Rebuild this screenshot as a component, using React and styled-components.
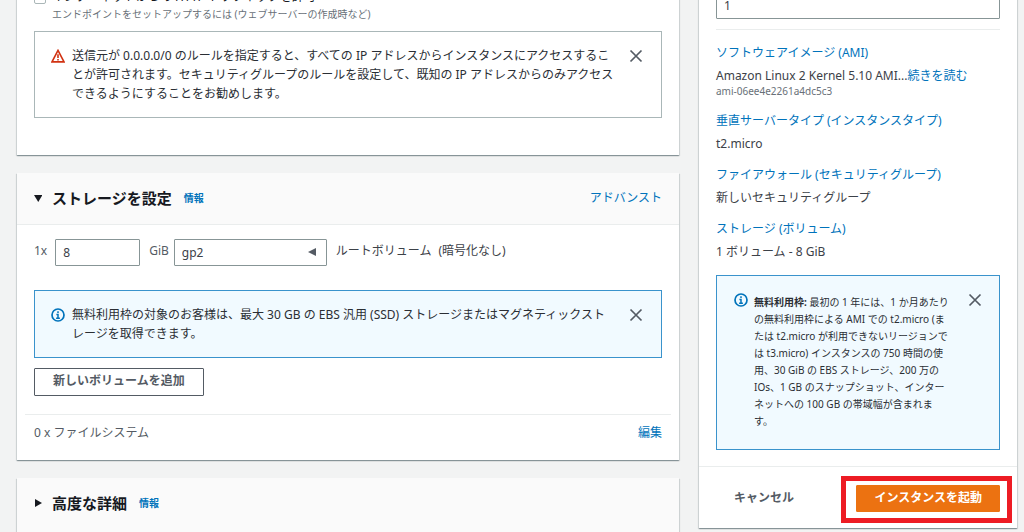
import React from 'react';
import styled, { createGlobalStyle } from 'styled-components';

const GlobalStyle = createGlobalStyle`
  *, *::before, *::after { box-sizing: border-box; }
  body {
    margin: 0;
    background: #f2f3f3;
    color: #16191f;
    font-family: "Noto Sans", "Noto Sans CJK JP", sans-serif;
    font-size: 12px;
    line-height: 18px;
  }
  button, input, select { font: inherit; color: inherit; }
  p, h2, dl, dd { margin: 0; }
`;

const Page = styled.div`
  height: 100vh;
  overflow: hidden;
`;

const Columns = styled.div`
  display: grid;
  grid-template-columns: minmax(0, 1fr) 318px;
  align-items: start;
  gap: 20px;
  margin-top: -12px;
  padding: 0 7px 0 17px;
`;

const Stack = styled.main`
  display: flex;
  flex-direction: column;
  gap: 18px;
`;

const Card = styled.section`
  background: #fff;
  box-shadow: 0 1px 1px 0 rgba(0, 28, 36, 0.3), 1px 1px 1px 0 rgba(0, 28, 36, 0.1),
    -1px 1px 1px 0 rgba(0, 28, 36, 0.1);
`;

const CardHeader = styled.header`
  display: flex;
  align-items: center;
  justify-content: space-between;
  height: 52px;
  padding: 0 17px 2px;
  background: #fafafa;
  border-bottom: 1px solid #eaeded;
`;

const Title = styled.h2`
  display: flex;
  align-items: center;
  font-size: 15px;
  font-weight: 700;
  line-height: 20px;
`;

const Toggle = styled.button`
  display: flex;
  align-items: center;
  gap: 10px;
  padding: 0;
  border: 0;
  background: none;
`;

const Link = styled.a`
  color: #0073bb;
  text-decoration: none;
`;

const InfoLink = styled(Link)`
  margin-left: 12px;
  font-size: 10px;
  font-weight: 700;
`;

const CardBody = styled.div`
  padding: ${(p) => p.$top}px 17px ${(p) => p.$bottom}px;
`;

const CollapsedCard = styled(Card)`
  padding-bottom: 18px;
  background: #fafafa;

  ${CardHeader} { border-bottom: 0; }
`;

const CheckRow = styled.label`
  display: flex;
  align-items: center;
  gap: 6px;
`;

const Checkbox = styled.input`
  appearance: none;
  width: 12px;
  height: 12px;
  margin: 2px 0 0;
  border: 1px solid #aab7b8;
  border-radius: 2px;
  background: #fff;
`;

const Hint = styled.p`
  margin: 0 0 9px 18px;
  color: #687078;
  font-size: 10px;
  line-height: 16px;
`;

const AlertBox = styled.div`
  display: flex;
  align-items: flex-start;
  padding: ${(p) => (p.$small ? '18px 16px 19px 17px' : '14px 17px 14px 16px')};
  border: 1px solid ${(p) => (p.$info ? '#3a93cc' : '#aab7b8')};
  background: ${(p) => (p.$info ? '#f1faff' : '#fff')};
`;

const AlertIcon = styled.svg`
  flex: none;
  width: 14px;
  height: 14px;
  margin: ${(p) => (p.$small ? '-1px 6px 0 0' : '3px 7px 0 0')};
`;

const AlertText = styled.p`
  flex: 1;
  min-width: 0;
  white-space: nowrap;
  color: #2a2e34;
  font-size: ${(p) => (p.$small ? 10 : 12)}px;
  line-height: ${(p) => (p.$small ? 17 : 19)}px;
`;

const CloseButton = styled.button`
  flex: none;
  display: flex;
  margin: ${(p) => (p.$small ? '-2px' : '2px')} 0 0;
  padding: 1px;
  border: 0;
  background: none;
  color: #545b64;
`;

const FieldRow = styled.div`
  display: flex;
  align-items: flex-start;
  margin-bottom: 24px;
  color: #545b64;
  line-height: 24px;
`;

const FieldLabel = styled.label`
  margin: 0 ${(p) => p.$after}px 0 ${(p) => p.$before || 0}px;
`;

const TextBox = styled.input`
  display: block;
  width: ${(p) => p.$width};
  height: 27px;
  padding: 0 7px;
  border: 1px solid #879596;
  border-radius: 1px;
  background: #fff;
  color: #3c4148;
`;

const SelectWrap = styled.span`
  position: relative;
  width: 153px;
  margin-right: 9px;

  svg {
    position: absolute;
    top: 9px;
    right: 11px;
    pointer-events: none;
  }
`;

const Select = styled.select`
  appearance: none;
  display: block;
  width: 100%;
  height: 27px;
  padding: 0 7px;
  border: 1px solid #879596;
  border-radius: 1px;
  background: #fff;
  color: #3c4148;
`;

const RootLabel = styled.span`
  margin-right: 7px;
  color: #3c4148;
`;

const Button = styled.button`
  height: ${(p) => (p.$tall ? 28 : 27)}px;
  padding: 0 ${(p) => (p.$tall ? 18 : 17)}px 2px;
  border: 1px solid ${(p) => p.$border || p.$fill || 'transparent'};
  border-radius: 1px;
  background: ${(p) => p.$fill || 'transparent'};
  color: ${(p) => (p.$fill ? '#fff' : '#545b64')};
  font-weight: 700;
  line-height: 18px;
  white-space: nowrap;
`;

const AddRow = styled.div`
  display: flex;
  margin-top: 10px;
`;

const FileSystemRow = styled.div`
  display: flex;
  justify-content: space-between;
  margin: 18px -9px 0;
  padding: 9px 9px 0;
  border-top: 1px solid #eaeded;
  color: #545b64;
`;

const SummaryBody = styled.div`
  padding: 4px 17px 16px;
`;

const SummaryList = styled.dl`
  margin: 10px 0 14px;
  padding-top: 14px;
  border-top: 1px solid #eaeded;
  white-space: nowrap;
`;

const SummaryItem = styled.div`
  & + & { margin-top: 13px; }
  dd { margin-top: 5px; color: #3c4148; }
`;

const Small = styled.span`
  display: block;
  padding-bottom: 2px;
  color: #687078;
  font-size: 10px;
  line-height: 12px;
`;

const SummaryFooter = styled.footer`
  display: flex;
  justify-content: space-between;
  padding: 18px 17px 16px;
  border-top: 1px solid #eaeded;
`;

const Highlight = styled.div`
  position: relative;
  display: flex;

  &::after {
    content: '';
    position: absolute;
    inset: -9px -12px -11px -15px;
    border: 5px solid #ed1c24;
    pointer-events: none;
  }
`;

function Caret({ open }) {
  return (
    <svg width="8" height="10" viewBox="0 0 8 10" aria-hidden="true">
      <path d={open ? 'M0 2h8.5L4.25 9z' : 'M1 1v8l7-4z'} fill="#16191f" />
    </svg>
  );
}

function WarningIcon() {
  return (
    <AlertIcon viewBox="0 0 14 14" fill="none" stroke="#d13212" strokeWidth="1.6" aria-hidden="true">
      <path d="M7 1.4 13 12.9H1z" />
      <path d="M7 5.2v3.9M7 10v1.6" />
    </AlertIcon>
  );
}

function InfoIcon({ small }) {
  return (
    <AlertIcon $small={small} viewBox="0 0 14 14" fill="none" stroke="#0073bb" strokeWidth="1.7" aria-hidden="true">
      <circle cx="7" cy="7" r="6" />
      <path d="M7 3.2v1.7M5.4 6.5H7v3.7M5.1 10.3h3.8" strokeWidth="1.5" />
    </AlertIcon>
  );
}

function Close({ small }) {
  return (
    <CloseButton type="button" aria-label="閉じる" $small={small}>
      <svg width="14" height="14" viewBox="0 0 14 14" fill="none" stroke="currentColor" strokeWidth="1.7">
        <path d="M1.5 1.5l11 11M12.5 1.5l-11 11" />
      </svg>
    </CloseButton>
  );
}

function Lines({ items }) {
  return items.map((line, i) => (
    <React.Fragment key={line}>
      {i > 0 && <br />}
      {line}
    </React.Fragment>
  ));
}

function SectionTitle({ open, text }) {
  return (
    <Title>
      <Toggle type="button" aria-expanded={open}>
        <Caret open={open} />
        {text}
      </Toggle>
      <InfoLink href="#info">情報</InfoLink>
    </Title>
  );
}

function Item({ title, children }) {
  return (
    <SummaryItem>
      <dt><Link href="#section">{title}</Link></dt>
      <dd>{children}</dd>
    </SummaryItem>
  );
}

export default function App() {
  return (
    <Page>
      <GlobalStyle />
      <Columns>
        <Stack>
          <Card>
            <CardBody $top={0} $bottom={37}>
              <CheckRow>
                <Checkbox type="checkbox" />
                インターネットからの HTTP トラフィックを許可
              </CheckRow>
              <Hint>エンドポイントをセットアップするには (ウェブサーバーの作成時など)</Hint>
              <AlertBox>
                <WarningIcon />
                <AlertText>
                  <Lines
                    items={[
                      '送信元が 0.0.0.0/0 のルールを指定すると、すべての IP アドレスからインスタンスにアクセスするこ',
                      'とが許可されます。セキュリティグループのルールを設定して、既知の IP アドレスからのみアクセス',
                      'できるようにすることをお勧めします。',
                    ]}
                  />
                </AlertText>
                <Close />
              </AlertBox>
            </CardBody>
          </Card>

          <Card>
            <CardHeader>
              <SectionTitle open text="ストレージを設定" />
              <Link href="#advanced">アドバンスト</Link>
            </CardHeader>
            <CardBody $top={14} $bottom={18}>
              <FieldRow>
                <FieldLabel htmlFor="size" $after={8}>1x</FieldLabel>
                <TextBox id="size" $width="85px" defaultValue="8" />
                <FieldLabel htmlFor="type" $before={9} $after={5}>GiB</FieldLabel>
                <SelectWrap>
                  <Select id="type" defaultValue="gp2">
                    <option>gp2</option>
                  </Select>
                  <svg width="8" height="8" viewBox="0 0 8 8" aria-hidden="true">
                    <path d="M8 0v8L0 4z" fill="#545b64" />
                  </svg>
                </SelectWrap>
                <RootLabel>ルートボリューム</RootLabel>
                <RootLabel>(暗号化なし)</RootLabel>
              </FieldRow>
              <AlertBox $info>
                <InfoIcon />
                <AlertText>
                  <Lines
                    items={[
                      '無料利用枠の対象のお客様は、最大 30 GB の EBS 汎用 (SSD) ストレージまたはマグネティックスト',
                      'レージを取得できます。',
                    ]}
                  />
                </AlertText>
                <Close />
              </AlertBox>
              <AddRow>
                <Button type="button" $tall $border="#545b64">新しいボリュームを追加</Button>
              </AddRow>
              <FileSystemRow>
                <span>0 x ファイルシステム</span>
                <Link href="#edit">編集</Link>
              </FileSystemRow>
            </CardBody>
          </Card>

          <CollapsedCard>
            <CardHeader>
              <SectionTitle open={false} text="高度な詳細" />
            </CardHeader>
          </CollapsedCard>
        </Stack>

        <Card as="aside">
          <SummaryBody>
            <TextBox $width="100%" aria-label="インスタンス数" defaultValue="1" />
            <SummaryList>
              <Item title="ソフトウェアイメージ (AMI)">
                Amazon Linux 2 Kernel 5.10 AMI...<Link href="#more">続きを読む</Link>
                <Small>ami-06ee4e2261a4dc5c3</Small>
              </Item>
              <Item title="垂直サーバータイプ (インスタンスタイプ)">t2.micro</Item>
              <Item title="ファイアウォール (セキュリティグループ)">新しいセキュリティグループ</Item>
              <Item title="ストレージ (ボリューム)">1 ボリューム - 8 GiB</Item>
            </SummaryList>
            <AlertBox $info $small>
              <InfoIcon small />
              <AlertText $small>
                <strong>無料利用枠:</strong>{' '}
                <Lines
                  items={[
                    '最初の 1 年には、1 か月あたり',
                    'の無料利用枠による AMI での t2.micro (ま',
                    'たは t2.micro が利用できないリージョンで',
                    'は t3.micro) インスタンスの 750 時間の使',
                    '用、30 GiB の EBS ストレージ、200 万の',
                    'IOs、1 GB のスナップショット、インター',
                    'ネットへの 100 GB の帯域幅が含まれま',
                    'す。',
                  ]}
                />
              </AlertText>
              <Close small />
            </AlertBox>
          </SummaryBody>
          <SummaryFooter>
            <Button type="button">キャンセル</Button>
            <Highlight>
              <Button type="button" $fill="#ec7211">インスタンスを起動</Button>
            </Highlight>
          </SummaryFooter>
        </Card>
      </Columns>
    </Page>
  );
}
